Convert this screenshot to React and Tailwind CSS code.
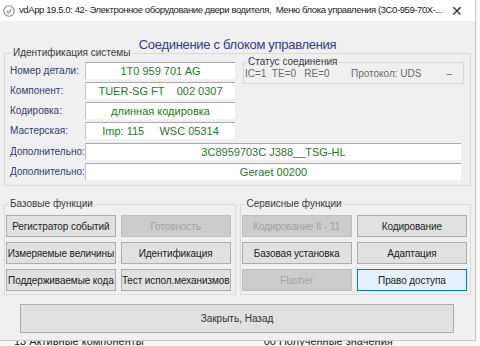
import React from 'react'

const font = { fontFamily: '"Liberation Sans", Arial, sans-serif' }

function Field({ children, wide }) {
  return (
    <div
      className={`h-[17px] bg-white border-t border-l border-t-[#a9a9a9] border-l-[#c8c8c8] flex items-center justify-center text-[11px] leading-none text-[#1f7a1f] ${
        wide ? 'flex-1' : 'w-[150px]'
      }`}
    >
      {children}
    </div>
  )
}

function Row({ label, children }) {
  return (
    <div className="flex items-center h-[17px]">
      <span className="w-[75px] text-[10px] text-[#34406f] whitespace-nowrap">{label}</span>
      {children}
    </div>
  )
}

function Btn({ children, disabled, active }) {
  const look = disabled
    ? 'bg-[#cccccc] border-[#bfbfbf] text-[#a3a3a3]'
    : active
      ? 'bg-[#e5f1fb] border-[#0078d7] text-[#222]'
      : 'bg-[#e1e1e1] border-[#adadad] text-[#222]'
  return (
    <div className={`h-[22px] border flex items-center justify-center text-[10px] tracking-[-0.1px] whitespace-nowrap ${look}`}>
      {children}
    </div>
  )
}

export default function App() {
  return (
    <div className="w-[480px] h-[346px] overflow-hidden bg-[#f7f7f7]" style={font}>
      <div className="w-[476px] h-[341px] bg-[#f0f0f0] border-r border-b border-[#c9c9c9] flex flex-col">
        {/* title bar */}
        <div className="h-[21px] bg-white flex items-center pl-[3px] pr-[12px] shrink-0">
          <svg width="12" height="12" viewBox="0 0 12 12" className="mr-[4px] shrink-0">
            <circle cx="6" cy="6" r="5.2" fill="none" stroke="#8a8a8a" strokeWidth="1.1" />
            <path d="M3.6 6.2 L5.3 7.8 L8.4 4.3" fill="none" stroke="#8a8a8a" strokeWidth="1.2" />
          </svg>
          <span className="text-[9.5px] tracking-[-0.4px] text-[#1a1a1a] whitespace-nowrap flex-1 min-w-0">
            vdApp 19.5.0: 42- Электронное оборудование двери водителя,&nbsp; Меню блока управления (3C0-959-70X-...
          </span>
          <span className="text-[14px] text-[#333] leading-none ml-[6px] shrink-0">✕</span>
        </div>

        {/* heading */}
        <div className="h-[17px] mt-[15px] text-center text-[13px] tracking-[-0.3px] leading-[17px] text-[#363a8c]">
          Соединение с блоком управления
        </div>

        {/* identification */}
        <fieldset className="-mt-[6px] mx-[4px] border border-[#d9d9d9] px-[5px] pb-[5px]">
          <legend className="text-[10px] text-[#3a3a3a] px-[2px] ml-[1px] leading-[12px]">Идентификация системы</legend>
          <div className="flex mt-[3px]">
            <div className="flex flex-col gap-[3px] w-[226px]">
              <Row label="Номер детали:"><Field>1T0 959 701 AG</Field></Row>
              <Row label="Компонент:"><Field>TUER-SG FT&nbsp;&nbsp;&nbsp;&nbsp;002 0307</Field></Row>
              <Row label="Кодировка:"><Field>длинная кодировка</Field></Row>
              <Row label="Мастерская:"><Field>Imp: 115&nbsp;&nbsp;&nbsp;&nbsp;&nbsp;WSC 05314</Field></Row>
            </div>
            <fieldset className="ml-[7px] -mt-[6px] w-[221px] h-[28px] border border-[#d9d9d9] px-[1px]">
              <legend className="text-[10px] text-[#3a3a3a] px-[1px] ml-[2px] leading-[12px]">Статус соединения</legend>
              <div className="flex text-[10px] text-[#6a6a6a] leading-[12px]">
                <span className="w-[106px]">IC=1&nbsp; TE=0&nbsp;&nbsp; RE=0</span>
                <span className="flex-1">Протокол: UDS</span>
                <span className="mr-[10px]">–</span>
              </div>
            </fieldset>
          </div>
          <div className="flex flex-col gap-[3px] mt-[4px] mr-[4px]">
            <Row label="Дополнительно:"><Field wide>3C8959703C J388__TSG-HL</Field></Row>
            <Row label="Дополнительно:"><Field wide>Geraet 00200</Field></Row>
          </div>
        </fieldset>

        {/* function groups */}
        <div className="flex mt-[12px] mx-[4px] gap-[4px]">
          <fieldset className="w-[232px] border border-[#dcdcdc] pl-[1px] pr-[4px] pb-[3px]">
            <legend className="text-[10px] text-[#3a3a3a] px-[1px] ml-[3px] leading-[12px]">Базовые функции</legend>
            <div className="grid grid-cols-2 gap-x-[5px] gap-y-[5px] mt-[5px]">
              <Btn>Регистратор событий</Btn>
              <Btn disabled>Готовность</Btn>
              <Btn>Измеряемые величины</Btn>
              <Btn>Идентификация</Btn>
              <Btn>Поддерживаемые кода</Btn>
              <Btn>Тест испол.механизмов</Btn>
            </div>
          </fieldset>
          <fieldset className="w-[232px] border border-[#dcdcdc] pl-[1px] pr-[3px] pb-[3px]">
            <legend className="text-[10px] text-[#3a3a3a] px-[1px] ml-[4px] leading-[12px]">Сервисные функции</legend>
            <div className="grid grid-cols-2 gap-x-[5px] gap-y-[5px] mt-[5px]">
              <Btn disabled>Кодирование II - 11</Btn>
              <Btn>Кодирование</Btn>
              <Btn>Базовая установка</Btn>
              <Btn>Адаптация</Btn>
              <Btn disabled>Flasher</Btn>
              <Btn active>Право доступа</Btn>
            </div>
          </fieldset>
        </div>

        {/* close */}
        <div className="mt-[9px] ml-[20px] w-[434px] h-[29px] bg-[#e1e1e1] border border-[#adadad] flex items-center justify-center text-[10px] text-[#333]">
          Закрыть, Назад
        </div>
      </div>
      {/* underlying window text peeking below */}
      <div className="h-[5px] overflow-hidden">
        <div className="flex text-[11px] text-[#222] leading-[12px] -mt-[6px] pl-[14px] gap-[120px] whitespace-nowrap">
          <span>13 Активные компоненты</span>
          <span>00 Полученные значения</span>
        </div>
      </div>
    </div>
  )
}
